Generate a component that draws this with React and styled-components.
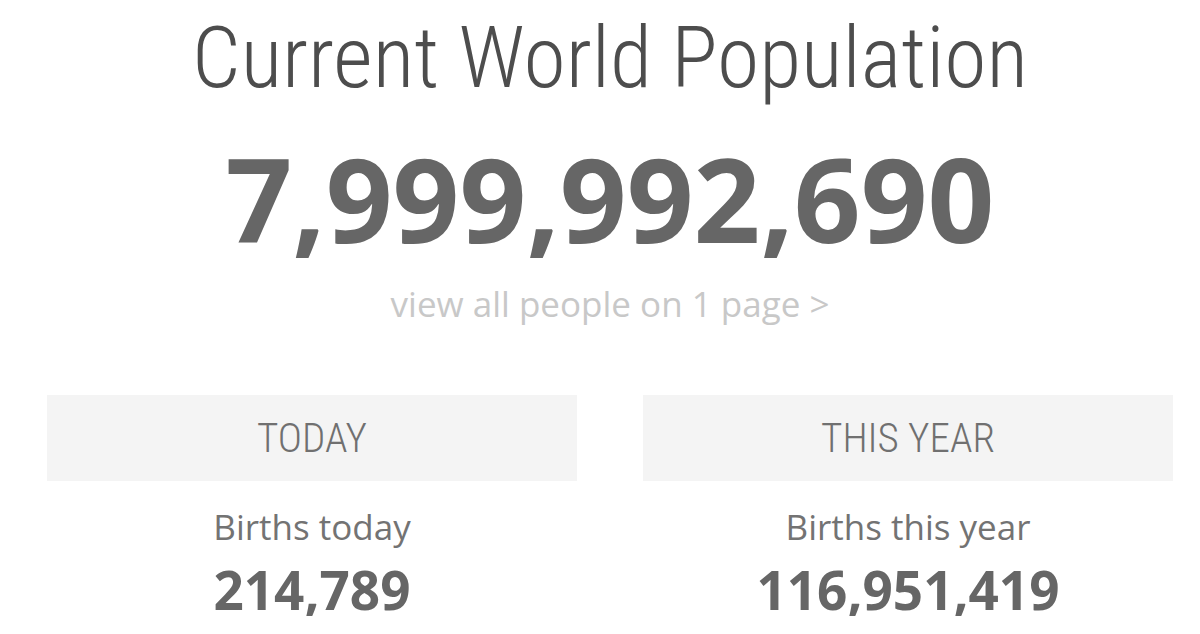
import React from 'react';
import styled, { createGlobalStyle } from 'styled-components';

const GlobalStyle = createGlobalStyle`
  * { margin: 0; padding: 0; box-sizing: border-box; }
  html, body { background: #fff; }
  body { font-family: "Open Sans", "Liberation Sans", sans-serif; color: #666; }
`;

const Page = styled.div`
  width: 1126px;
  margin-left: 47px;
  display: flex;
  flex-direction: column;
  align-items: center;
`;

const Title = styled.h1`
  font-family: Roboto, "Liberation Sans", sans-serif;
  font-weight: 300;
  font-size: 86px;
  line-height: 1;
  color: #4d4d4d;
  font-stretch: condensed;
  margin-top: 15px;
  white-space: nowrap;
`;

const BigCount = styled.div`
  font-family: "Open Sans", sans-serif;
  font-weight: 700;
  font-size: 117px;
  line-height: 1;
  color: #666;
  margin-top: 38px;
`;

const PeopleLink = styled.a`
  font-family: "Open Sans", sans-serif;
  font-size: 35px;
  line-height: 1;
  color: #c8c8c8;
  text-decoration: none;
  margin-top: 30px;
`;

const Columns = styled.div`
  width: 100%;
  display: grid;
  grid-template-columns: 1fr 1fr;
  column-gap: 66px;
  margin-top: 74px;
`;

const Column = styled.div`
  display: flex;
  flex-direction: column;
  align-items: center;
`;

const Header = styled.div`
  width: 100%;
  height: 86px;
  background: #f4f4f4;
  display: flex;
  align-items: center;
  justify-content: center;
  font-family: Roboto, sans-serif;
  font-weight: 300;
  font-size: 41px;
  font-stretch: condensed;
  color: #707070;
`;

const StatLabel = styled.div`
  font-family: "Open Sans", sans-serif;
  font-size: 35px;
  line-height: 1;
  color: #737373;
  margin-top: 28px;
`;

const StatValue = styled.div`
  font-family: "Open Sans", sans-serif;
  font-weight: 700;
  font-size: 53px;
  line-height: 1;
  color: #666;
  margin-top: 19px;
`;

const columns = [
  { head: 'TODAY', label: 'Births today', value: '214,789' },
  { head: 'THIS YEAR', label: 'Births this year', value: '116,951,419' },
];

export default function App() {
  return (
    <>
      <GlobalStyle />
      <Page>
        <Title>Current World Population</Title>
        <BigCount>7,999,992,690</BigCount>
        <PeopleLink href="#">view all people on 1 page &gt;</PeopleLink>
        <Columns>
          {columns.map((c) => (
            <Column key={c.head}>
              <Header>{c.head}</Header>
              <StatLabel>{c.label}</StatLabel>
              <StatValue>{c.value}</StatValue>
            </Column>
          ))}
        </Columns>
      </Page>
    </>
  );
}
